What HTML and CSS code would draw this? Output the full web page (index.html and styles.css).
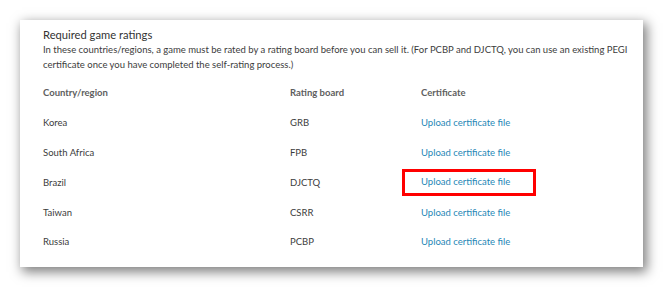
FILE: index.html
```html
<!DOCTYPE html>
<html lang="en">
<head>
    <meta charset="UTF-8">
    <meta name="viewport" content="width=device-width, initial-scale=1.0">
    <title>Required game ratings</title>
    <link rel="stylesheet" href="styles.css">
</head>
<body>

    <div class="page">
        <div class="card">
            <h2 class="title">Required game ratings</h2>
            <p class="intro">In these countries/regions, a game must be rated by a rating board before you can sell it. (For PCBP and DJCTQ, you can use an existing PEGI certificate once you have completed the self-rating process.)</p>

            <!-- Ratings table -->
            <table class="ratings">
                <tr>
                    <th class="col-country">Country/region</th>
                    <th class="col-board">Rating board</th>
                    <th>Certificate</th>
                </tr>
                <tr>
                    <td>Korea</td>
                    <td>GRB</td>
                    <td><a href="#" class="upload">Upload certificate file</a></td>
                </tr>
                <tr>
                    <td>South Africa</td>
                    <td>FPB</td>
                    <td><a href="#" class="upload">Upload certificate file</a></td>
                </tr>
                <tr>
                    <td>Brazil</td>
                    <td>DJCTQ</td>
                    <td><span class="highlight"><a href="#" class="upload">Upload certificate file</a></span></td>
                </tr>
                <tr>
                    <td>Taiwan</td>
                    <td>CSRR</td>
                    <td><a href="#" class="upload">Upload certificate file</a></td>
                </tr>
                <tr>
                    <td>Russia</td>
                    <td>PCBP</td>
                    <td><a href="#" class="upload">Upload certificate file</a></td>
                </tr>
            </table>
        </div>
    </div>

</body>
</html>
```

FILE: styles.css
```css
body {
    margin: 0;
    background-color: #fff;
    font-family: Lato, "Open Sans", sans-serif;
    color: #3c3c3c;
}
.page {
    padding: 20px 21px 20px 20px;
}
.card {
    width: 623px;
    height: 247px;
    box-sizing: border-box;
    padding: 8px 0 0 23px;
    background-color: #fff;
    box-shadow: 3px 4px 11px 1px rgba(0, 0, 0, 0.5);
}
.title {
    margin: 0;
    font-size: 11.2px;
    font-weight: normal;
    line-height: 14px;
    color: #333;
}
.intro {
    margin: 0;
    font-size: 9.5px;
    line-height: 15px;
    width: 592px;
}
.ratings {
    margin-top: 6px;
    border-collapse: collapse;
    font-size: 9.5px;
}
.ratings th,
.ratings td {
    padding: 0;
    height: 29.8px;
    text-align: left;
    vertical-align: middle;
}
.ratings th {
    font-weight: bold;
    color: #5e5e5e;
}
.col-country {
    width: 247px;
}
.col-board {
    width: 131px;
}
.upload {
    color: #1f87b6;
    text-decoration: none;
}
.highlight {
    display: inline-block;
    margin-left: -19px;
    padding: 4px 23px 5px 16px;
    line-height: 12px;
    border: 3px solid #f00;
}
```
